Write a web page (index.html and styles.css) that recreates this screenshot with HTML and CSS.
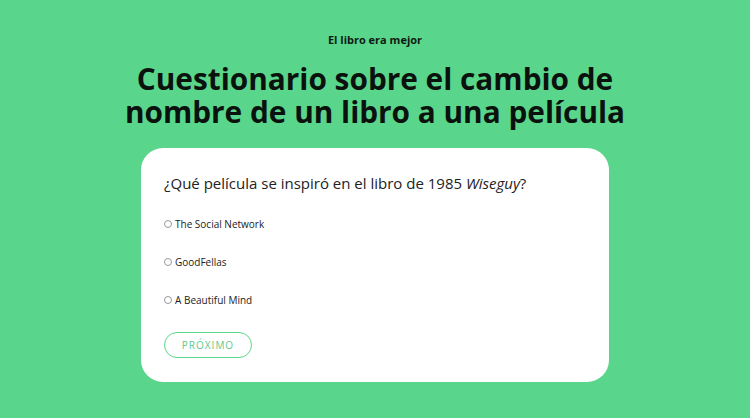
FILE: index.html
```html
<!DOCTYPE html>
<html lang="es">
<head>
<meta charset="utf-8">
<link rel="stylesheet" href="styles.css">
</head>
<body>
<main class="page">
  <p class="eyebrow">El libro era mejor</p>
  <h1 class="title"><span class="line">Cuestionario sobre el cambio de</span><span class="line">nombre de un libro a una película</span></h1>
  <section class="card">
    <p class="question">¿Qué película se inspiró en el libro de 1985 <em>Wiseguy</em>?</p>
    <ul class="options">
      <li class="option"><span class="radio"></span>The Social Network</li>
      <li class="option"><span class="radio"></span>GoodFellas</li>
      <li class="option"><span class="radio"></span>A Beautiful Mind</li>
    </ul>
    <button class="next">PRÓXIMO</button>
  </section>
</main>
</body>
</html>
```
FILE: styles.css
```css
html, body {
  margin: 0;
  padding: 0;
  background: #59d68b;
}
body {
  width: 750px;
  height: 418px;
  overflow: hidden;
  font-family: "Open Sans", "DejaVu Sans", sans-serif;
  color: #111;
}
.page {
  display: flex;
  flex-direction: column;
  align-items: center;
  padding-top: 33px;
}
.eyebrow {
  margin: 0;
  font-size: 11px;
  line-height: 14px;
  font-weight: 700;
  color: #0f1a12;
}
.title {
  margin: 15px 0 0;
  font-size: 29.8px;
  line-height: 33px;
  font-weight: 700;
  text-align: center;
  color: #0b120d;
}
.title .line {
  display: block;
}
.card {
  margin-top: 20px;
  width: 468px;
  box-sizing: border-box;
  background: #fff;
  border-radius: 22px;
  padding: 24px 23px 24px;
}
.question {
  margin: 0;
  font-size: 15px;
  line-height: 22px;
  color: #222;
}
.question em {
  font-style: italic;
}
.options {
  list-style: none;
  margin: 23px 0 0;
  padding: 0;
  display: flex;
  flex-direction: column;
  gap: 24px;
}
.option {
  display: flex;
  align-items: center;
  font-size: 10px;
  line-height: 14px;
  color: #222;
}
.radio {
  width: 6px;
  height: 6px;
  border: 1px solid #999;
  border-radius: 50%;
  margin-right: 3px;
  flex: none;
}
.next {
  margin-top: 25px;
  width: 88px;
  height: 26px;
  border: 1.5px solid #59d68b;
  border-radius: 13px;
  background: #fff;
  color: #62c98c;
  font-family: inherit;
  font-size: 10px;
  letter-spacing: 1px;
  padding: 0;
  display: block;
}
```
